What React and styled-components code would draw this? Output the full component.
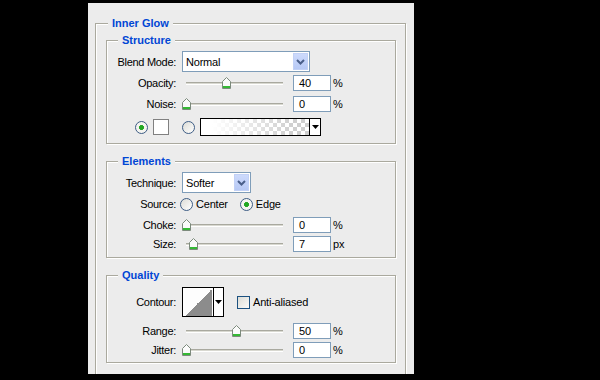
import styled, { createGlobalStyle } from "styled-components";

const GlobalStyle = createGlobalStyle`
  html, body {
    margin: 0;
    background: #000;
  }
  body {
    font-family: "Liberation Sans", Arial, sans-serif;
    font-size: 11px;
  }
`;

function App() {
  return (
    <>
      <GlobalStyle />
      <Page>
        <Panel>
          <OuterGroup>
            <Legend>Inner Glow</Legend>

            <Group $pt={10} $pb={7}>
              <Legend $inner>Structure</Legend>
              <Row $h={21}>
                <Label>Blend Mode:</Label>
                <Select $w={128} value="Normal" />
              </Row>
              <SliderRow label="Opacity:" value="40" pos={40} unit="%" mt={3} />
              <SliderRow label="Noise:" value="0" pos={0} unit="%" mt={5} />
              <ColorRow>
                <Radio checked />
                <Swatch />
                <RadioWrap>
                  <Radio />
                </RadioWrap>
                <GradientBox>
                  <GradientFill />
                  <MiniArrow />
                </GradientBox>
              </ColorRow>
            </Group>

            <Group $pt={10} $pb={5}>
              <Legend $inner>Elements</Legend>
              <Row $h={21}>
                <Label>Technique:</Label>
                <Select $w={69} value="Softer" />
              </Row>
              <Row $h={14} $mt={4} $gap={4}>
                <Label>Source:</Label>
                <Option>
                  <Radio />
                  <span>Center</span>
                </Option>
                <Option $ml={8}>
                  <Radio checked />
                  <span>Edge</span>
                </Option>
              </Row>
              <SliderRow label="Choke:" value="0" pos={0} unit="%" mt={6} />
              <SliderRow label="Size:" value="7" pos={7} unit="px" mt={3} />
            </Group>

            <Group $pt={11} $pb={4}>
              <Legend $inner>Quality</Legend>
              <Row $h={30}>
                <Label>Contour:</Label>
                <ContourBox>
                  <ContourPreview>
                    <ContourShape />
                  </ContourPreview>
                  <MiniArrow />
                </ContourBox>
                <Option $ml={7}>
                  <Checkbox />
                  <span>Anti-aliased</span>
                </Option>
              </Row>
              <SliderRow label="Range:" value="50" pos={50} unit="%" mt={6} />
              <SliderRow label="Jitter:" value="0" pos={0} unit="%" mt={3} />
            </Group>
          </OuterGroup>
        </Panel>
      </Page>
    </>
  );
}

function SliderRow({ label, value, pos, unit, mt }) {
  return (
    <Row $h={16} $mt={mt}>
      <Label>{label}</Label>
      <Slider>
        <Track />
        <Thumb style={{ left: `calc(${pos}% * 0.97 - 0.5px)` }}>
          <svg width="9" height="12" viewBox="0 0 9 12">
            <path
              d="M0.5 4.5 L4.5 0.5 L8.5 4.5 V11.5 H0.5 Z"
              fill="#fbfbfb"
              stroke="#7c8a7c"
            />
            <rect x="1" y="9" width="7" height="2" fill="#35b935" />
          </svg>
        </Thumb>
      </Slider>
      <NumInput>{value}</NumInput>
      <Unit>{unit}</Unit>
    </Row>
  );
}

function Select({ value, $w }) {
  return (
    <SelectBox $w={$w}>
      <span>{value}</span>
      <SelectButton>
        <svg width="9" height="6" viewBox="0 0 9 6">
          <path
            d="M1 1 L4.5 4.5 L8 1"
            fill="none"
            stroke="#4a5f8a"
            strokeWidth="2"
          />
        </svg>
      </SelectButton>
    </SelectBox>
  );
}

function MiniArrow() {
  return (
    <ArrowCell>
      <svg width="7" height="4" viewBox="0 0 7 4">
        <path d="M0 0 H7 L3.5 4 Z" fill="#000" />
      </svg>
    </ArrowCell>
  );
}

export default App;

const Page = styled.div`
  width: 600px;
  height: 380px;
  padding: 3px 0 0 88px;
  box-sizing: border-box;
  overflow: hidden;
`;

const Panel = styled.div`
  width: 326px;
  height: 371px;
  background: #ececec;
  overflow: hidden;
  padding: 20px 0 0 7px;
  box-sizing: border-box;
`;

const OuterGroup = styled.div`
  position: relative;
  width: 311px;
  padding: 16px 9px 40px 10px;
  box-sizing: border-box;
  border: 1px solid #aaa99e;
  box-shadow: inset 1px 1px 0 #fff, 1px 1px 0 #fff;
`;

const Group = styled.div`
  position: relative;
  width: 290px;
  box-sizing: border-box;
  padding: ${(p) => p.$pt}px 0 ${(p) => p.$pb}px 0;
  border: 1px solid #aaa99e;
  box-shadow: inset 1px 1px 0 #fff, 1px 1px 0 #fff;
  & + & {
    margin-top: 17px;
  }
`;

const Legend = styled.div`
  position: absolute;
  top: -7px;
  left: ${(p) => (p.$inner ? 11 : 12)}px;
  padding: 0 4px;
  background: #ececec;
  color: #0046d5;
  font-weight: bold;
  font-size: 11px;
  line-height: 13px;
`;

const Row = styled.div`
  display: flex;
  align-items: center;
  height: ${(p) => p.$h}px;
  margin-top: ${(p) => p.$mt || 0}px;
  gap: ${(p) => (p.$gap == null ? 6 : p.$gap)}px;
  color: #000;
`;

const Label = styled.div`
  width: 69px;
  flex: none;
  text-align: right;
  letter-spacing: -0.3px;
  white-space: nowrap;
`;

const SelectBox = styled.div`
  width: ${(p) => p.$w}px;
  height: 21px;
  box-sizing: border-box;
  border: 1px solid #7f9db9;
  background: #fff;
  display: flex;
  align-items: center;
  justify-content: space-between;
  padding: 1px 1px 1px 3px;
  span {
    letter-spacing: -0.2px;
  }
`;

const SelectButton = styled.div`
  width: 15px;
  height: 17px;
  background: linear-gradient(#cddafc, #b7c9f5);
  border: 1px solid #c2d1f6;
  box-sizing: border-box;
  display: flex;
  align-items: center;
  justify-content: center;
`;

const Slider = styled.div`
  position: relative;
  width: 105px;
  height: 12px;
  flex: none;
`;

const Track = styled.div`
  position: absolute;
  left: 4px;
  right: 4px;
  top: 5px;
  height: 1px;
  border-top: 1px solid #a9a99f;
  border-bottom: 1px solid #fff;
  background: #d8d8d0;
`;

const Thumb = styled.div`
  position: absolute;
  top: 0;
  width: 9px;
  height: 12px;
  svg {
    display: block;
  }
`;

const NumInput = styled.div`
  width: 38px;
  height: 16px;
  box-sizing: border-box;
  border: 1px solid #7f9db9;
  background: #fff;
  padding-left: 5px;
  line-height: 14px;
`;

const Unit = styled.span`
  margin-left: -4px;
`;

const ColorRow = styled.div`
  display: flex;
  align-items: center;
  height: 18px;
  margin-top: 6px;
  padding-left: 28px;
  gap: 5px;
`;

const RadioWrap = styled.div`
  margin-left: 8px;
  display: flex;
`;

const Radio = styled.span`
  width: 13px;
  height: 13px;
  flex: none;
  box-sizing: border-box;
  border-radius: 50%;
  border: 1px solid #3e5d85;
  background: ${(p) =>
    p.checked
      ? "radial-gradient(circle, #22a722 0 2.2px, #f4f4f0 2.8px)"
      : "linear-gradient(135deg, #dcdcd6, #fff)"};
`;

const Swatch = styled.div`
  width: 16px;
  height: 16px;
  box-sizing: border-box;
  border: 1px solid #808080;
  background: #fff;
`;

const GradientBox = styled.div`
  width: 121px;
  height: 18px;
  box-sizing: border-box;
  border: 1px solid #000;
  display: flex;
`;

const GradientFill = styled.div`
  flex: 1;
  border-right: 1px solid #000;
  background:
    linear-gradient(to right, #fff 10%, rgba(255, 255, 255, 0) 85%),
    repeating-conic-gradient(#cfcfcf 0 25%, #fff 0 50%) 0 0 / 8px 8px;
`;

const ArrowCell = styled.div`
  width: 10px;
  display: flex;
  align-items: center;
  justify-content: center;
  background: #fff;
`;

const Option = styled.div`
  display: flex;
  align-items: center;
  gap: 3px;
  margin-left: ${(p) => p.$ml || 0}px;
  letter-spacing: -0.2px;
`;

const ContourBox = styled.div`
  width: 42px;
  height: 30px;
  box-sizing: border-box;
  border: 1px solid #000;
  display: flex;
`;

const ContourPreview = styled.div`
  width: 30px;
  border-right: 1px solid #000;
  background: #fff;
  padding: 1px 1px 0 2px;
  display: flex;
`;

const ContourShape = styled.div`
  flex: 1;
  background: linear-gradient(to top left, #8c8c8c 50%, #fdfdfd 50%);
`;

const Checkbox = styled.span`
  width: 13px;
  height: 13px;
  box-sizing: border-box;
  border: 1px solid #1c5180;
  background: linear-gradient(135deg, #dcdcd6, #fbfbf9);
`;
